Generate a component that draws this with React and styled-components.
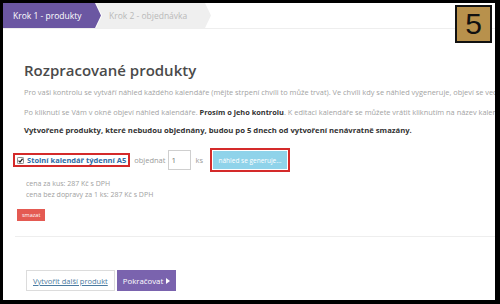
import React from 'react';
import styled, { createGlobalStyle } from 'styled-components';

const GlobalStyle = createGlobalStyle`
  html, body {
    margin: 0;
    padding: 0;
    background: #fff;
  }
  body {
    font-family: "Open Sans", "Liberation Sans", sans-serif;
  }
`;

const Frame = styled('div')`
  width: 500px;
  height: 304px;
  box-sizing: border-box;
  border-style: solid;
  border-color: #000;
  border-width: 3px 5px 4px 3px;
  background: #fff;
  overflow: hidden;
  position: relative;
`;

const TabBar = styled('div')`
  display: flex;
  height: 25px;
  border-bottom: 1px solid #eeeeee;
`;

const Tab = styled('div')`
  display: flex;
  align-items: center;
  height: 25px;
  box-sizing: border-box;
  font-size: 8.5px;
  white-space: nowrap;
  background: ${p => (p.$active ? '#6b57a2' : '#efefef')};
  color: ${p => (p.$active ? '#fff' : '#b9b9b9')};
  width: ${p => p.$width}px;
  padding-left: ${p => (p.$active ? 10 : 13)}px;
  margin-left: ${p => (p.$active ? 0 : -5)}px;
  clip-path: ${p => (p.$active
    ? 'polygon(0 0, calc(100% - 6px) 0, 100% 50%, calc(100% - 6px) 100%, 0 100%)'
    : 'polygon(0 0, calc(100% - 6px) 0, 100% 50%, calc(100% - 6px) 100%, 0 100%, 6px 50%)')};
`;

const Badge = styled('div')`
  position: absolute;
  top: 2px;
  right: 3px;
  width: 37px;
  height: 38px;
  box-sizing: border-box;
  border: 2px solid #111;
  background: #b8914c;
  display: flex;
  align-items: center;
  justify-content: center;
  font-family: "Liberation Sans", sans-serif;
  font-size: 30px;
  color: #111;
`;

const Content = styled('div')`
  padding: 0 0 0 10px;
`;

const Intro = styled('div')`
  padding-left: 11px;
`;

const Heading = styled('h1')`
  margin: 31px 0 0;
  font-size: 15px;
  line-height: 20px;
  font-weight: 600;
  color: #4a4a4a;
`;

const Para = styled('p')`
  margin: ${p => p.$top}px 0 0;
  font-size: ${p => (p.$strong ? 7.7 : 7.4)}px;
  line-height: 10px;
  white-space: nowrap;
  color: ${p => (p.$strong ? '#333' : '#a3a3a3')};
  font-weight: ${p => (p.$strong ? 700 : 400)};
  b {
    color: #333;
    font-weight: 700;
  }
`;

const ProductRow = styled('div')`
  display: flex;
  align-items: center;
  margin-top: 13px;
  height: 24px;
`;

const Marked = styled('div')`
  display: flex;
  align-items: center;
  gap: 3px;
  border: 2px solid #d42a2a;
  padding: 1px 2px 1px 2px;
  height: 14px;
  box-sizing: border-box;
`;

const Check = styled('svg')`
  width: 7px;
  height: 7px;
  flex: none;
`;

const ProductLink = styled('a')`
  font-size: 7.5px;
  font-weight: 700;
  color: #2d6ba6;
  text-decoration: none;
  white-space: nowrap;
`;

const Label = styled('span')`
  font-size: 7.5px;
  color: #9a9a9a;
  margin: 0 3px 0 ${p => p.$left}px;
`;

const Qty = styled('div')`
  width: 23px;
  height: 20px;
  box-sizing: border-box;
  border: 1px solid #cfcfcf;
  font-size: 8px;
  color: #777;
  padding: 3px 0 0 2px;
`;

const Highlight = styled('div')`
  border: 2px solid #d42a2a;
  padding: 1px;
  margin-left: 4px;
`;

const PreviewButton = styled('div')`
  width: 74px;
  height: 18px;
  background: #8fd3ea;
  color: #fff;
  font-size: 6.5px;
  display: flex;
  align-items: center;
  justify-content: center;
`;

const Details = styled('div')`
  padding-left: 13px;
  margin-top: 6px;
`;

const Price = styled('div')`
  font-size: 7px;
  line-height: 11px;
  color: #a0a0a0;
`;

const DeleteButton = styled('div')`
  display: inline-block;
  margin: 0 0 0 4px;
  background: #e45a52;
  color: #fff;
  font-size: 5.5px;
  padding: 2px 5px;
  line-height: 8px;
`;

const Rule = styled('div')`
  margin: 14px 0 0 2px;
  border-top: 1px solid #eeeeee;
`;

const Actions = styled('div')`
  display: flex;
  gap: 2px;
  margin: 33px 0 0 13px;
`;

const OutlineButton = styled('div')`
  height: 21px;
  box-sizing: border-box;
  border: 1px solid #dcdcdc;
  padding: 0 6px;
  display: flex;
  align-items: center;
  font-size: 7.5px;
  color: #4a7aa0;
  text-decoration: underline;
  background: #fff;
`;

const PrimaryButton = styled('div')`
  height: 21px;
  box-sizing: border-box;
  padding: 0 6px;
  display: flex;
  align-items: center;
  gap: 3px;
  font-size: 7.8px;
  color: #fff;
  background: #7a63ae;
`;

const App = () => (
  <>
    <GlobalStyle />
    <Frame>
      <TabBar>
        <Tab $active $width={98}>Krok 1 - produkty</Tab>
        <Tab $width={115}>Krok 2 - objednávka</Tab>
      </TabBar>
      <Badge>5</Badge>
      <Content>
        <Intro>
          <Heading>Rozpracované produkty</Heading>
          <Para $top={7}>
            Pro vaši kontrolu se vytváří náhled každého kalendáře (mějte strpení chvíli to může trvat). Ve chvíli kdy se náhled vygeneruje, objeví se vedle názvu produktu tlačítko.
          </Para>
          <Para $top={10}>
            Po kliknutí se Vám v okně objeví náhled kalendáře. <b>Prosím o jeho kontrolu</b>. K editaci kalendáře se můžete vrátit kliknutím na název kalendáře.
          </Para>
          <Para $top={8} $strong>
            Vytvořené produkty, které nebudou objednány, budou po 5 dnech od vytvoření nenávratně smazány.
          </Para>
        </Intro>
        <ProductRow>
          <Marked>
            <Check viewBox="0 0 8 8">
              <rect x="0.5" y="0.5" width="7" height="7" rx="1" fill="#fff" stroke="#777" />
              <path d="M1.8 4.2 L3.4 5.8 L6.4 2" fill="none" stroke="#222" strokeWidth="1.4" />
            </Check>
            <ProductLink href="#">Stolní kalendář týdenní A5</ProductLink>
          </Marked>
          <Label $left={4}>objednat</Label>
          <Qty>1</Qty>
          <Label $left={4}>ks</Label>
          <Highlight>
            <PreviewButton>náhled se generuje...</PreviewButton>
          </Highlight>
        </ProductRow>
        <Details>
          <Price>cena za kus: 287 Kč s DPH</Price>
          <Price>cena bez dopravy za 1 ks: 287 Kč s DPH</Price>
        </Details>
        <DeleteButton>smazat</DeleteButton>
        <Rule />
        <Actions>
          <OutlineButton>Vytvořit další produkt</OutlineButton>
          <PrimaryButton>
            Pokračovat
            <svg width="4" height="6" viewBox="0 0 4 6">
              <path d="M0 0 L4 3 L0 6 Z" fill="#fff" />
            </svg>
          </PrimaryButton>
        </Actions>
      </Content>
    </Frame>
  </>
);

export default App;
